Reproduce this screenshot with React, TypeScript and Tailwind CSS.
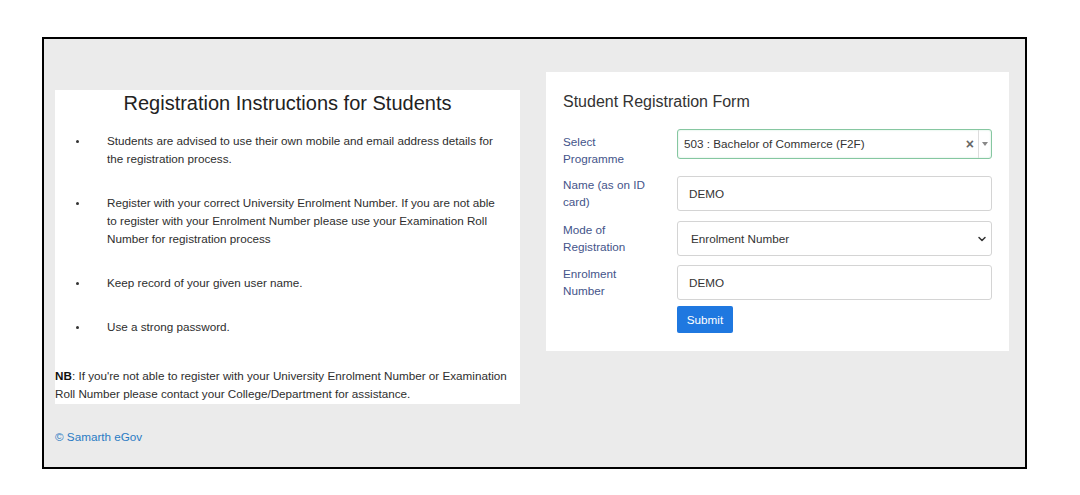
import { ChevronDown } from 'lucide-react';

const font = { fontFamily: '"Liberation Sans", Arial, sans-serif' };

const items: string[][] = [
  ['Students are advised to use their own mobile and email address details for', 'the registration process.'],
  [
    'Register with your correct University Enrolment Number. If you are not able',
    'to register with your Enrolment Number please use your Examination Roll',
    'Number for registration process',
  ],
  ['Keep record of your given user name.'],
  ['Use a strong password.'],
];

function Label({ lines, className = '' }: { lines: string[]; className?: string }) {
  return (
    <div className={`w-[114px] shrink-0 text-[11.7px] leading-[17px] text-[#44548a] ${className}`}>
      {lines.map((l) => (
        <div key={l}>{l}</div>
      ))}
    </div>
  );
}

export default function App() {
  return (
    <div className="min-h-screen bg-white pl-[42px] pt-[37px]" style={font}>
      <div className="flex h-[432px] w-[985px] border-2 border-black bg-[#ebebeb] pl-[11px]">
        {/* left column */}
        <div className="flex w-[465px] flex-col pt-[51px]">
          <div className="bg-white">
            <h1 className="text-center text-[20px] font-medium leading-[26px] text-[#222]">
              Registration Instructions for Students
            </h1>
            <ul className="mt-[16px]">
              {items.map((lines, i) => (
                <li key={i} className="mb-[26px] flex text-[11.7px] leading-[18px] text-[#2e2e2e]">
                  <span className="flex w-[52px] shrink-0 justify-end pr-[28px] pt-[8px]">
                    <span className="block h-[3px] w-[3px] rounded-full bg-[#333]" />
                  </span>
                  <span className="whitespace-nowrap">
                    {lines.map((l) => (
                      <div key={l}>{l}</div>
                    ))}
                  </span>
                </li>
              ))}
            </ul>
            <p className="mt-[31px] whitespace-nowrap pb-[1px] text-[11.7px] leading-[18px] text-[#2e2e2e]">
              <b className="text-[#111]">NB</b>: If you're not able to register with your University Enrolment Number or Examination
              <br />
              Roll Number please contact your College/Department for assistance.
            </p>
          </div>
          <div className="mt-[24px] text-[11.7px] leading-[18px] text-[#2a7bc4]">© Samarth eGov</div>
        </div>

        {/* right card */}
        <div className="ml-[26px] mt-[33px] h-[279px] w-[463px] bg-white pl-[17px] pr-[17px]">
          <h2 className="mt-[20px] text-[16px] leading-[20px] text-[#333]">Student Registration Form</h2>

          <div className="mt-[17px] flex items-start">
            <Label lines={['Select', 'Programme']} className="pt-[4px]" />
            <div className="flex h-[30px] w-[315px] items-center rounded-[3px] border border-[#86c7a1] pl-[6px] text-[11.7px] text-[#333] shadow-[inset_0_0_2px_rgba(92,184,132,0.35)]">
              <span className="flex-1">503 : Bachelor of Commerce (F2F)</span>
              <span className="pr-[4px] text-[14px] font-bold leading-none text-[#666]">×</span>
              <span className="flex h-full w-[13px] items-center justify-center border-l border-[#ddd]">
                <span className="h-0 w-0 border-x-[3px] border-t-[4px] border-x-transparent border-t-[#888]" />
              </span>
            </div>
          </div>

          <div className="mt-[9px] flex items-start">
            <Label lines={['Name (as on ID', 'card)']} />
            <div className="flex h-[35px] w-[315px] items-center rounded-[3px] border border-[#d4d4d4] pl-[11px] text-[11.7px] text-[#333]">
              DEMO
            </div>
          </div>

          <div className="mt-[10px] flex items-start">
            <Label lines={['Mode of', 'Registration']} />
            <div className="flex h-[35px] w-[315px] items-center rounded-[3px] border border-[#d4d4d4] pl-[13px] pr-[3px] text-[11.7px] text-[#333]">
              <span className="flex-1">Enrolment Number</span>
              <ChevronDown size={12} strokeWidth={3} className="text-[#333]" />
            </div>
          </div>

          <div className="mt-[9px] flex items-start">
            <Label lines={['Enrolment', 'Number']} />
            <div className="flex h-[35px] w-[315px] items-center rounded-[3px] border border-[#d4d4d4] pl-[11px] text-[11.7px] text-[#333]">
              DEMO
            </div>
          </div>

          <div className="mt-[6px] pl-[114px]">
            <button className="h-[27px] w-[56px] rounded-[2px] bg-[#1f78e0] text-[11.7px] text-white">Submit</button>
          </div>
        </div>
      </div>
    </div>
  );
}
